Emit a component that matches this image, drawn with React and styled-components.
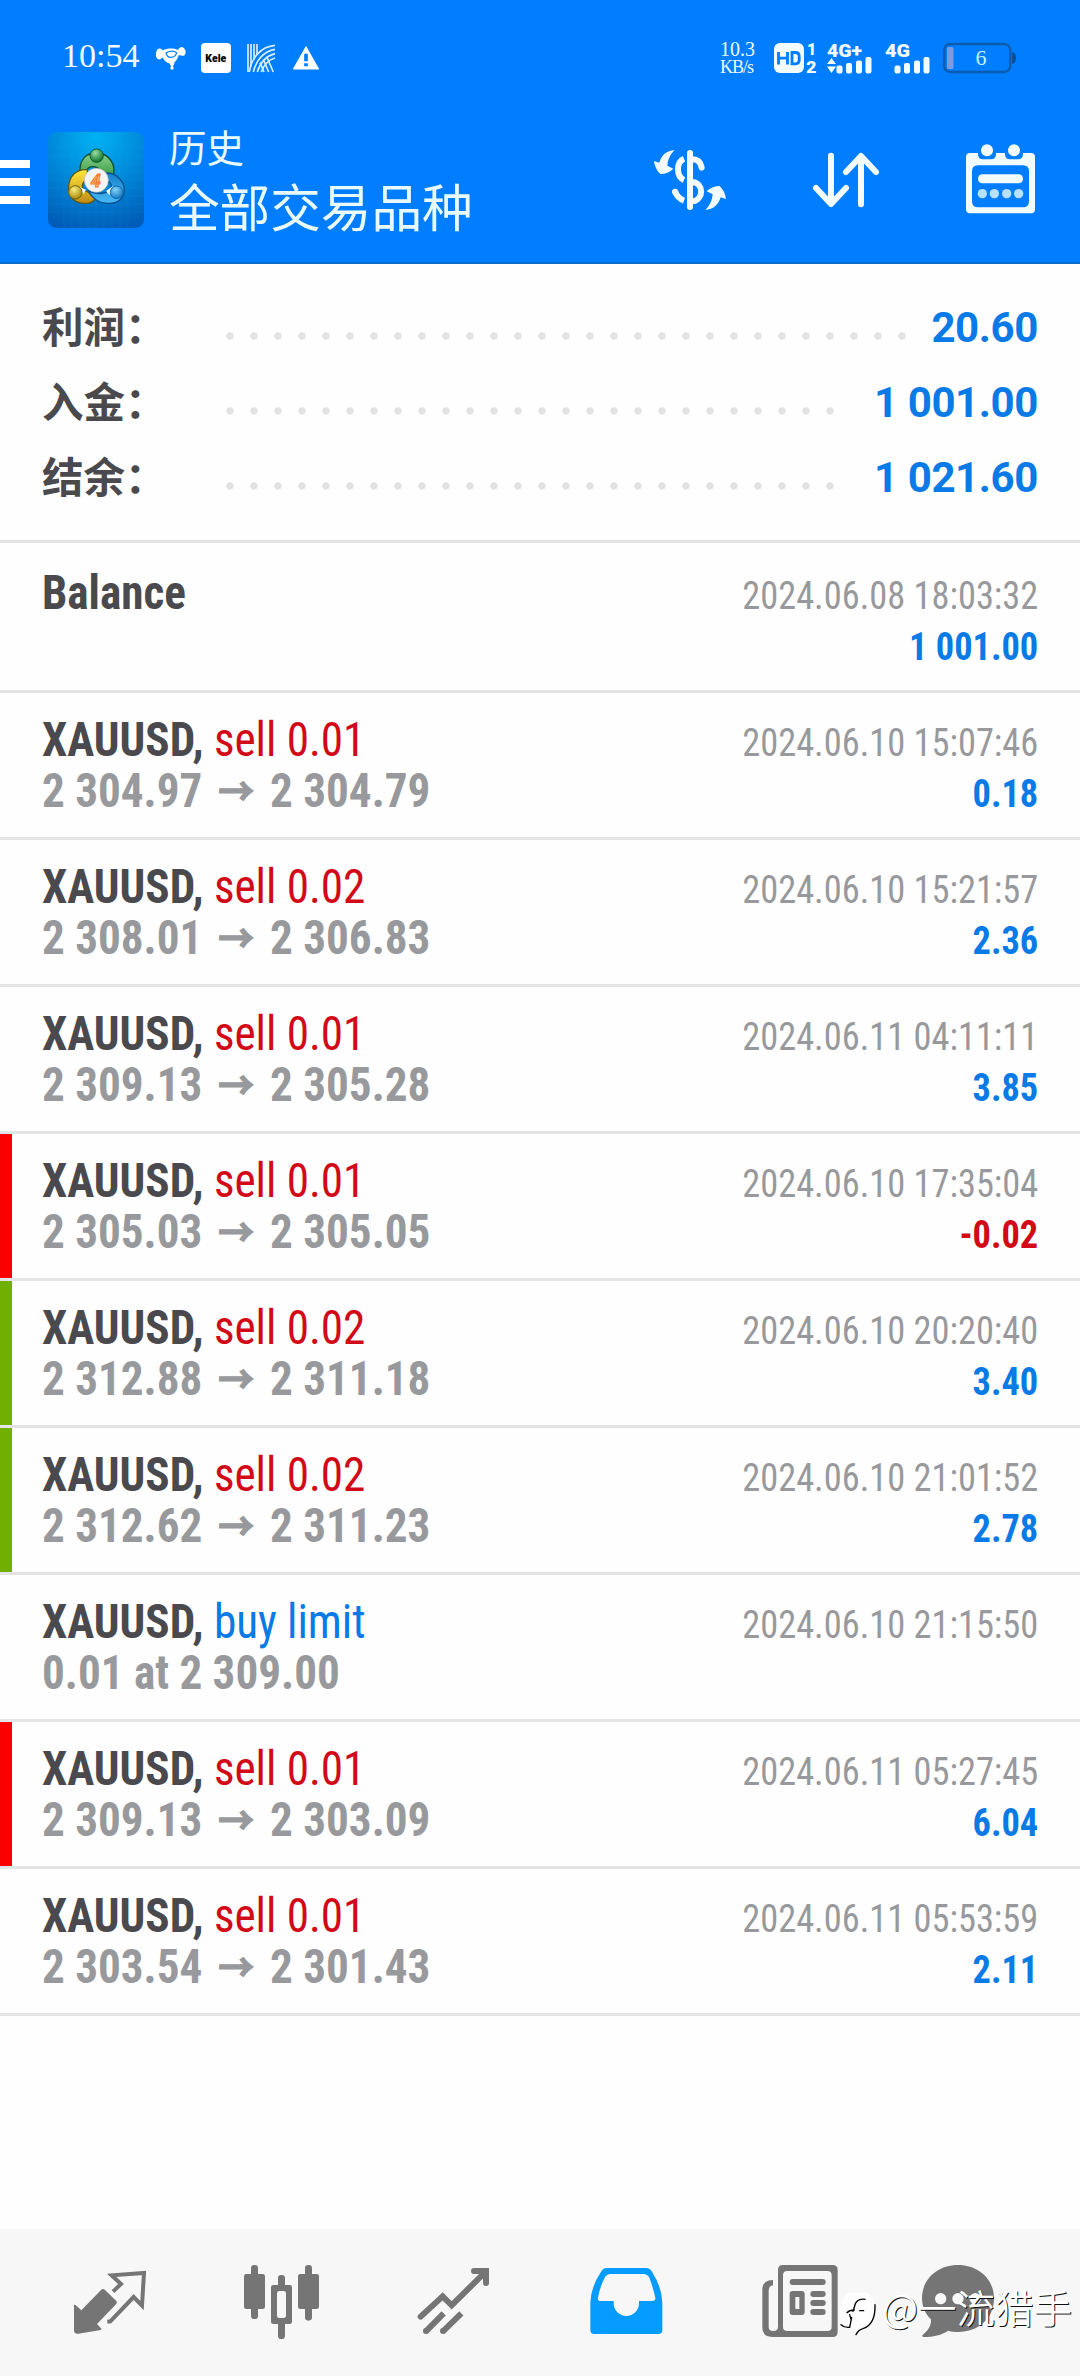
import React from 'react'
import styled, { createGlobalStyle } from 'styled-components'

const GlobalStyle = createGlobalStyle`
  * {
    box-sizing: border-box;
  }

  body {
    margin: 0;
    background-color: #ffffff;
    font-family: Roboto, 'Noto Sans CJK SC', sans-serif;
  }

  svg {
    display: block;
    flex: none;
    overflow: visible;
  }
`

const Screen = styled.div`
  position: relative;
  display: flex;
  flex-direction: column;
  width: 1080px;
  height: 2376px;
  background-color: #fefefe;
  overflow: hidden;
`

/* ---------- top area ---------- */

const Header = styled.header`
  height: 264px;
  background-color: #007eff;
  border-bottom: 2px solid #0a6cd0;
`

const StatusBar = styled.div`
  display: flex;
  align-items: center;
  height: 116px;
  padding: 0 65px 0 62px;
  color: #f0fbff;
`

const Clock = styled.span`
  width: 94px;
  font-family: 'Liberation Serif', serif;
  font-size: 34px;
  line-height: 40px;
  margin-top: -5px;
`

const StatusIcons = styled.div`
  display: flex;
  flex: 1;
  gap: 15px;
`

const Speed = styled.div`
  width: 54px;
  font-family: 'Liberation Serif', serif;
  font-size: 20px;
  line-height: 18px;
  white-space: nowrap;
`

const SpeedUnit = styled.div`
  font-size: 18px;
  letter-spacing: -1px;
`

const SignalIcons = styled.div`
  display: flex;
  gap: 13px;

  svg:first-child {
    margin-right: -4px;
  }
`

const Toolbar = styled.div`
  display: flex;
  align-items: center;
  height: 128px;
  padding-right: 44px;
`

const MenuButton = styled.div`
  display: flex;
  flex-direction: column;
  gap: 10px;
  width: 48px;
  padding-top: 4px;
`

const MenuBar = styled.div`
  width: 30px;
  height: 8px;
  background-color: #ffffff;
`

const Titles = styled.div`
  flex: 1;
  padding-left: 25px;
  color: #e9faff;
  font-family: 'Noto Sans CJK SC', sans-serif;
`

const Title = styled.div`
  margin-top: -2px;
  font-size: 37.5px;
  line-height: 52px;
`

const Subtitle = styled.div`
  font-size: 50.6px;
  line-height: 66px;
`

const Actions = styled.div`
  display: flex;
  align-items: center;
  gap: 85px;
`

/* ---------- summary ---------- */

const Summary = styled.section`
  display: flex;
  flex-direction: column;
  height: 279px;
  padding: 26px 42px 0;
  border-bottom: 3px solid #e4e4e4;
`

const SummaryRow = styled.div`
  display: flex;
  align-items: center;
  height: 75px;
`

const SummaryLabel = styled.span`
  width: 176px;
  margin-top: -6px;
  color: #4a494e;
  font-family: 'Noto Sans CJK SC', sans-serif;
  font-size: 41.5px;
  line-height: 60px;
  font-weight: 700;
`

const Dots = styled.span`
  width: ${({ $count }) => $count * 24}px;
  height: 8px;
  margin-top: 17px;
  background: radial-gradient(circle at 12px 4px, #e2e2e2 3.4px, transparent 4px) 0 0 / 24px 8px repeat-x;
`

const SummaryValue = styled.span`
  margin-left: auto;
  color: #0a7ae6;
  font-size: 42px;
  font-weight: 700;
  letter-spacing: -0.4px;
`

/* ---------- deals ---------- */

const Deal = styled.div`
  display: flex;
  justify-content: space-between;
  height: ${({ $tall }) => ($tall ? 150 : 147)}px;
  padding: ${({ $tall }) => ($tall ? 24 : 21)}px 42px 0;
  border-bottom: 3px solid #e4e4e4;
  background: linear-gradient(${({ $mark = 'transparent' }) => `${$mark}, ${$mark}`}) 0 0 / 12px 100% no-repeat;
`

const Column = styled.div`
  display: flex;
  flex-direction: column;
  align-items: ${({ $end }) => ($end ? 'flex-end' : 'flex-start')};
  padding-top: ${({ $end }) => ($end ? 4 : 0)}px;
  font-family: 'Roboto Condensed', Roboto, sans-serif;
  font-stretch: condensed;
  white-space: pre;
  transform: scaleX(${({ $end }) => ($end ? 0.933 : 0.94)});
  transform-origin: ${({ $end }) => ($end ? 'right' : 'left')} top;
`

const Symbol = styled.div`
  color: #4a494e;
  font-size: 48px;
  line-height: 51px;
  font-weight: 700;
`

const Side = styled.span`
  color: ${({ $buy }) => ($buy ? '#0a7ae6' : '#d20a17')};
  font-weight: 400;
`

const Prices = styled.div`
  display: flex;
  align-items: center;
  color: #98999c;
  font-size: 48px;
  line-height: 51px;
  font-weight: 700;
`

const Arrow = styled.span`
  margin: -4px 17px 0;
  font-family: 'Noto Sans CJK SC', sans-serif;
  font-size: 38px;
  -webkit-text-stroke: 1.4px #98999c;
`

const Time = styled.div`
  color: #98999c;
  font-size: 39px;
  line-height: 51px;
`

const Profit = styled.div`
  color: ${({ $loss }) => ($loss ? '#d20a17' : '#0a7ae6')};
  font-size: 39px;
  line-height: 51px;
  font-weight: 700;
`

/* ---------- bottom navigation ---------- */

const NavBar = styled.nav`
  display: flex;
  height: 147px;
  margin-top: auto;
  padding: 21px 24px 0;
  background-color: #f7f7f7;
`

const NavItem = styled.div`
  display: flex;
  justify-content: center;
  flex: 0 0 ${({ $width }) => $width || 172}px;
  color: ${({ $active }) => ($active ? '#069bff' : '#757575')};
`

const Watermark = styled.div`
  position: absolute;
  right: 8px;
  bottom: 39px;
  display: flex;
  align-items: center;
  gap: 5px;
  color: #ffffff;
  font-family: 'Noto Sans CJK SC', sans-serif;
  font-size: 38.5px;
  font-weight: 350;
  line-height: 54px;
  text-shadow: 1px 1px 0 #111111;
  white-space: nowrap;

  svg {
    margin-top: 17px;
  }
`

const MascotIcon = () => (
  <svg width="30" height="30" viewBox="468 69 90 90" fill="#fff">
    <path d="M470 92C474 84 482 84 488 91C504 84 520 84 534 90C538 80 548 78 551 84C559 90 559 104 551 107C545 109 541 104 536 106C532 120 524 130 515 132C500 130 492 122 488 112C482 120 474 120 470 114C466 106 468 98 470 92Z" />
    <path d="M498 99C506 92 522 92 530 98C528 108 520 112 512 112C504 112 500 108 498 99Z" fill="none" stroke="#007eff" strokeWidth="3.5" />
    <circle cx="516" cy="144" r="5" />
    <path d="M508 128L516 146L524 128Z" />
  </svg>
)

const KeleIcon = () => (
  <svg width="30" height="30" viewBox="0 0 30 30">
    <rect width="30" height="30" rx="4" fill="#fff" />
    <text x="4.3" y="18.8" textLength="21" lengthAdjust="spacingAndGlyphs" fontFamily="Roboto" fontWeight="900" fontSize="10.5" fill="#000">
      Kele
    </text>
  </svg>
)

const WavesIcon = () => (
  <svg width="30" height="30" viewBox="738 69 90 90" fill="none" stroke="#d5edff" strokeWidth="5">
    <path d="M744 72V156M753 72V140M762 72V120M771 72V104" />
    <path d="M748 156C754 116 780 80 825 76M760 156C768 122 790 94 825 88M772 156C780 130 798 108 825 101M784 156C790 138 804 120 825 114" />
    <path d="M780 128L792 156M790 118L806 156M800 110L820 156" />
  </svg>
)

const WarningIcon = () => (
  <svg width="30" height="30" viewBox="873 69 90 90">
    <path d="M918 80L956 147H880Z" fill="#fff" stroke="#fff" strokeWidth="3" strokeLinejoin="round" />
    <path d="M918 101V124M918 130V139" stroke="#007eff" strokeWidth="11" />
  </svg>
)

const HdIcon = () => (
  <svg width="44" height="32" viewBox="0 0 44 32" fill="#f2fcff" fontFamily="Roboto" fontWeight="900">
    <rect x="0" y="1" width="30" height="30" rx="6" />
    <path d="M4.5 10V22.5M13.5 10V22.5M4.5 16.2H13.5" fill="none" stroke="#007eff" strokeWidth="2.8" />
    <path d="M18 10.5H21.5Q25.2 10.5 25.2 14.5V18Q25.2 21.8 21.5 21.8H18Z" fill="none" stroke="#007eff" strokeWidth="2.8" />
    <text x="33" y="12.8" fontSize="16">
      1
    </text>
    <text x="32" y="30.5" fontSize="17" textLength="10.5" lengthAdjust="spacingAndGlyphs">
      2
    </text>
  </svg>
)

const SignalIcon = ({ plus }) => (
  <svg width="45" height="32" viewBox="0 0 45 32" fill="#f2fcff">
    <text x="0" y="14.5" fontFamily="Roboto" fontWeight="900" fontSize="18.5" textLength={plus ? 35 : 25} lengthAdjust="spacingAndGlyphs">
      {plus ? '4G+' : '4G'}
    </text>
    {plus && <path d="M4.5 16L9 22H0ZM4.5 31L0 24.5H9Z" />}
    <rect x="9.5" y="23.5" width="6" height="8" rx="2" />
    <rect x="19" y="21" width="6" height="10.5" rx="2" />
    <rect x="29" y="18.5" width="6" height="13" rx="2" />
    <rect x="38.5" y="15" width="6" height="16.5" rx="2" />
  </svg>
)

const BatteryIcon = () => (
  <svg width="72" height="32" viewBox="0 0 72 32">
    <rect x="1.2" y="2" width="66" height="28" rx="6" fill="none" stroke="#0b5cae" strokeWidth="2.4" />
    <path d="M69 10Q73 11 73 16Q73 21 69 22Z" fill="#0b4f96" />
    <rect x="4" y="5" width="6.5" height="22" rx="1.5" fill="#7c9be0" />
    <text x="32.5" y="22.5" fontFamily="Liberation Serif" fontSize="22" fill="#c5f2ff">
      6
    </text>
  </svg>
)

const AppLogo = () => (
  <svg width="96" height="96" viewBox="144 335 288 288">
    <defs>
      <radialGradient id="tile" cx="0.5" cy="0.05" r="1">
        <stop offset="0" stopColor="#00b2f2" />
        <stop offset="0.5" stopColor="#0088da" />
        <stop offset="1" stopColor="#005cb6" />
      </radialGradient>
      <linearGradient id="green" x1="0" y1="0" x2="0" y2="1">
        <stop offset="0" stopColor="#8ad08c" />
        <stop offset="1" stopColor="#1d8a2c" />
      </linearGradient>
      <linearGradient id="yellow" x1="0" y1="0" x2="0" y2="1">
        <stop offset="0" stopColor="#ffe83c" />
        <stop offset="1" stopColor="#c08a10" />
      </linearGradient>
      <linearGradient id="blue" x1="0" y1="0" x2="0" y2="1">
        <stop offset="0" stopColor="#1583cc" />
        <stop offset="1" stopColor="#48b8f4" />
      </linearGradient>
      <radialGradient id="greenBall" cx="0.4" cy="0.3" r="0.7">
        <stop offset="0" stopColor="#9ae0a4" />
        <stop offset="1" stopColor="#0c7028" />
      </radialGradient>
      <radialGradient id="yellowBall" cx="0.4" cy="0.3" r="0.7">
        <stop offset="0" stopColor="#f8ec80" />
        <stop offset="1" stopColor="#a88a08" />
      </radialGradient>
      <radialGradient id="blueBall" cx="0.4" cy="0.3" r="0.7">
        <stop offset="0" stopColor="#86d4fa" />
        <stop offset="1" stopColor="#1478c0" />
      </radialGradient>
    </defs>
    <rect x="144" y="335" width="288" height="288" rx="26" fill="url(#tile)" />
    <path
      d="M192 335V623M216 335V623M240 335V623M264 335V623M288 335V623M312 335V623M336 335V623M360 335V623M384 335V623M144 383H432M144 407H432M144 431H432M144 455H432M144 479H432M144 503H432M144 527H432M144 551H432M144 575H432"
      stroke="#40b8f0"
      strokeOpacity="0.16"
      strokeWidth="1.5"
    />
    <path
      d="M240 455C238 418 258 398 288 398C320 398 342 422 342 450C342 476 330 488 310 494L300 450C290 436 268 434 260 450Z"
      fill="url(#green)"
      stroke="#124f2c"
      strokeWidth="4"
    />
    <path
      d="M262 448C230 446 208 466 206 498C202 530 226 552 262 549C274 548 284 540 288 532L262 514C240 508 244 484 262 480Z"
      fill="url(#yellow)"
      stroke="#5c5a18"
      strokeWidth="4"
    />
    <path
      d="M318 458C352 458 374 486 373 510C370 538 350 550 322 549C294 548 274 532 266 512C284 520 314 526 332 506C338 494 330 484 320 480Z"
      fill="url(#blue)"
      stroke="#0c5090"
      strokeWidth="4"
    />
    <path d="M238 500L258 508L250 522ZM318 512L338 498L344 508L328 524Z" fill="#eef8ff" />
    <circle cx="290" cy="406" r="20" fill="url(#greenBall)" stroke="#125c30" strokeWidth="3" />
    <circle cx="226" cy="516" r="20" fill="url(#yellowBall)" stroke="#6a6414" strokeWidth="3" />
    <circle cx="350" cy="516" r="19" fill="url(#blueBall)" stroke="#0c6cb4" strokeWidth="3" />
    <circle cx="289" cy="480" r="36" fill="#f4f4f2" stroke="#b8b8b0" strokeWidth="2" />
    <text x="287" y="499" textAnchor="middle" fontFamily="Roboto" fontStyle="italic" fontWeight="700" fontSize="54" fill="#f8c070" stroke="#ef7a34" strokeWidth="3">
      4
    </text>
  </svg>
)

const CurrencyIcon = () => (
  <svg width="74" height="64" viewBox="99 84 222 192" fill="none" stroke="#f2fcff" strokeWidth="18">
    <path d="M210 99V261M218 118C234 118 242 127 245 143" strokeLinecap="round" />
    <path d="M192 116C168 126 168 170 192 180M218 186C252 190 252 238 218 244" />
    <path d="M165 214C170 228 178 237 192 242" />
    <circle cx="165" cy="215" r="9" fill="#f2fcff" stroke="none" />
    <path
      d="M164 90C140 92 125 104 118 128L102 123C104 140 112 154 122 162C136 162 150 156 160 146L142 137C144 116 152 102 164 90ZM256 270C280 268 295 256 302 232L318 237C316 220 308 206 298 198C284 198 270 204 260 214L278 223C276 244 268 258 256 270Z"
      fill="#f2fcff"
      stroke="none"
    />
  </svg>
)

const SortIcon = () => (
  <svg width="68" height="64" viewBox="576 84 204 192" fill="none" stroke="#f2fcff" strokeWidth="18" strokeLinecap="round" strokeLinejoin="round">
    <path d="M633 107V250M588 204L633 252L678 204" />
    <path d="M723 253V110M678 156L723 108L768 156" />
  </svg>
)

const CalendarIcon = () => (
  <svg width="71" height="71" viewBox="1035 74 213 213" fill="#f2fcff">
    <path
      fillRule="evenodd"
      d="M1050 98H1233Q1245 98 1245 110V267Q1245 279 1233 279H1050Q1038 279 1038 267V110Q1038 98 1050 98ZM1074 135Q1056 135 1056 153V243Q1056 261 1074 261H1209Q1227 261 1227 243V153Q1227 135 1209 135Z"
    />
    <path d="M1074 94H1128V102Q1128 117 1113 117H1089Q1074 117 1074 102ZM1155 94H1209V102Q1209 117 1194 117H1170Q1155 117 1155 102Z" fill="#007eff" />
    <circle cx="1101" cy="90" r="18" />
    <circle cx="1182" cy="90" r="18" />
    <rect x="1074" y="162" width="135" height="27" rx="13" />
    <g fill="#b8e0ff">
      <circle cx="1087" cy="220" r="14" />
      <circle cx="1123" cy="220" r="14" />
      <circle cx="1160" cy="220" r="14" />
      <circle cx="1196" cy="220" r="14" />
    </g>
  </svg>
)

const QuotesIcon = () => (
  <svg width="96" height="90" viewBox="6 0 288 270" fill="currentColor">
    <path d="M42 165Q44 163 50 168L64 181L123 120Q129 114 135 120L169 153Q173 158 168 163L111 222L125 237Q124 240 118 241L54 251Q42 252 42 241Z" />
    <path d="M159 125L183 102L155 76L252 69L246 167L221 141L151 214L142 215" fill="none" stroke="currentColor" strokeWidth="12" />
  </svg>
)

const ChartIcon = () => (
  <svg width="96" height="90" viewBox="522 0 288 270" fill="currentColor">
    <rect x="573" y="45" width="21" height="162" rx="10" />
    <rect x="552" y="72" width="63" height="105" rx="7" />
    <rect x="735" y="45" width="21" height="167" rx="10" />
    <rect x="714" y="72" width="63" height="105" rx="7" />
    <rect x="654" y="75" width="21" height="192" rx="10" />
    <rect x="633" y="105" width="63" height="117" rx="7" />
    <rect x="651" y="123" width="27" height="81" rx="7" fill="#f7f7f7" />
  </svg>
)

const TradeIcon = () => (
  <svg width="96" height="90" viewBox="1038 0 288 270" fill="none" stroke="currentColor" strokeWidth="18">
    <path d="M1082 200L1148 139L1175 166L1274 68M1242 63H1278V99" strokeLinecap="round" />
    <path d="M1262 54H1280Q1287 54 1287 61V80L1270 84L1256 70Z" fill="currentColor" stroke="none" />
    <path d="M1097 245L1151 190M1148 245L1204 190" />
    <circle cx="1098" cy="243" r="9" fill="currentColor" stroke="none" />
    <circle cx="1149" cy="243" r="9" fill="currentColor" stroke="none" />
  </svg>
)

const HistoryIcon = () => (
  <svg width="96" height="90" viewBox="-6 0 288 270" fill="currentColor">
    <path
      fillRule="evenodd"
      d="M80 54H198Q210 54 216 65Q246 112 247 158V240Q247 252 235 252H43Q31 252 31 240V158Q32 112 64 64Q70 54 80 54ZM92 72Q80 72 74 83Q60 110 54 143Q52 153 62 153H101V160A38 38 0 0 0 177 160V153H216Q227 153 226 144Q218 108 208 83Q202 72 190 72Z"
    />
  </svg>
)

const NewsIcon = () => (
  <svg width="96" height="90" viewBox="510 0 288 270" fill="currentColor">
    <path
      fillRule="evenodd"
      d="M609 45H758Q773 45 773 60V246Q773 261 758 261H576Q547 261 547 232V120Q547 90 579 90V106Q566 107 566 122V230Q566 243 579 243Q594 243 594 230V60Q594 45 609 45ZM622 63Q609 63 609 76V230Q609 243 622 243H742Q755 243 755 230V76Q755 63 742 63Z"
    />
    <rect x="629" y="87" width="108" height="18" rx="9" />
    <path fillRule="evenodd" d="M638 123H665Q674 123 674 132V186Q674 195 665 195H638Q629 195 629 186V132Q629 123 638 123ZM646 141V177H658V141Z" />
    <rect x="691" y="123" width="46" height="18" rx="9" />
    <rect x="691" y="150" width="46" height="18" rx="9" />
    <rect x="691" y="177" width="46" height="18" rx="9" />
  </svg>
)

const ChatIcon = () => (
  <svg width="96" height="90" viewBox="990 0 288 270" fill="currentColor">
    <path d="M1134 45C1196 45 1242 88 1242 145C1242 205 1196 246 1134 246C1124 246 1114 245 1105 242C1085 255 1060 261 1030 261C1026 260 1026 256 1030 253C1046 240 1054 226 1053 208C1036 192 1026 170 1026 145C1026 88 1072 45 1134 45Z" />
    <circle cx="1082" cy="146" r="17" fill="#f7f7f7" />
    <circle cx="1134" cy="146" r="17" fill="#f7f7f7" />
    <circle cx="1186" cy="146" r="17" fill="#f7f7f7" />
  </svg>
)

const CommunityLogo = () => (
  <svg width="38" height="46" viewBox="780 137 114 138" fill="none" strokeLinecap="round">
    <path d="M812 142H862Q886 150 887 182Q888 240 836 266Q832 250 806 246Q782 236 783 204Q780 160 812 142Z" fill="#fff" />
    <path d="M888 178Q890 236 852 250Q838 254 831 268" stroke="#000" strokeWidth="4" />
    <path d="M858 162Q830 158 826 186L822 198M812 208L816 222M786 238Q796 248 812 246L818 216M804 202Q812 194 826 194M842 196H854" stroke="#000" strokeWidth="4" />
  </svg>
)

const summary = [
  { label: '利润：', value: '20.60', dots: 29 },
  { label: '入金：', value: '1 001.00', dots: 26 },
  { label: '结余：', value: '1 021.60', dots: 26 }
]

const RED = '#fa0000'
const GREEN = '#70b000'

const deals = [
  { symbol: 'Balance', time: '2024.06.08 18:03:32', profit: '1 001.00' },
  { symbol: 'XAUUSD,', side: 'sell 0.01', from: '2 304.97', to: '2 304.79', time: '2024.06.10 15:07:46', profit: '0.18' },
  { symbol: 'XAUUSD,', side: 'sell 0.02', from: '2 308.01', to: '2 306.83', time: '2024.06.10 15:21:57', profit: '2.36' },
  { symbol: 'XAUUSD,', side: 'sell 0.01', from: '2 309.13', to: '2 305.28', time: '2024.06.11 04:11:11', profit: '3.85' },
  { symbol: 'XAUUSD,', side: 'sell 0.01', from: '2 305.03', to: '2 305.05', time: '2024.06.10 17:35:04', profit: '-0.02', mark: RED },
  { symbol: 'XAUUSD,', side: 'sell 0.02', from: '2 312.88', to: '2 311.18', time: '2024.06.10 20:20:40', profit: '3.40', mark: GREEN },
  { symbol: 'XAUUSD,', side: 'sell 0.02', from: '2 312.62', to: '2 311.23', time: '2024.06.10 21:01:52', profit: '2.78', mark: GREEN },
  { symbol: 'XAUUSD,', side: 'buy limit', from: '0.01 at 2 309.00', time: '2024.06.10 21:15:50' },
  { symbol: 'XAUUSD,', side: 'sell 0.01', from: '2 309.13', to: '2 303.09', time: '2024.06.11 05:27:45', profit: '6.04', mark: RED },
  { symbol: 'XAUUSD,', side: 'sell 0.01', from: '2 303.54', to: '2 301.43', time: '2024.06.11 05:53:59', profit: '2.11' }
]

export default function App() {
  return (
    <Screen>
      <GlobalStyle />
      <Header>
        <StatusBar>
          <Clock>10:54</Clock>
          <StatusIcons>
            <MascotIcon />
            <KeleIcon />
            <WavesIcon />
            <WarningIcon />
          </StatusIcons>
          <Speed>
            10.3
            <SpeedUnit>KB/s</SpeedUnit>
          </Speed>
          <SignalIcons>
            <HdIcon />
            <SignalIcon plus />
            <SignalIcon />
            <BatteryIcon />
          </SignalIcons>
        </StatusBar>
        <Toolbar>
          <MenuButton>
            <MenuBar />
            <MenuBar />
            <MenuBar />
          </MenuButton>
          <AppLogo />
          <Titles>
            <Title>历史</Title>
            <Subtitle>全部交易品种</Subtitle>
          </Titles>
          <Actions>
            <CurrencyIcon />
            <SortIcon />
            <CalendarIcon />
          </Actions>
        </Toolbar>
      </Header>

      <Summary>
        {summary.map(({ label, value, dots }) => (
          <SummaryRow key={label}>
            <SummaryLabel>{label}</SummaryLabel>
            <Dots $count={dots} />
            <SummaryValue>{value}</SummaryValue>
          </SummaryRow>
        ))}
      </Summary>

      {deals.map(({ symbol, side, from, to, time, profit, mark }) => (
        <Deal key={time} $tall={!side} $mark={mark}>
          <Column>
            <Symbol>
              {symbol}
              {side && <Side $buy={side.startsWith('buy')}> {side}</Side>}
            </Symbol>
            {from && (
              <Prices>
                {from}
                {to && <Arrow>→</Arrow>}
                {to}
              </Prices>
            )}
          </Column>
          <Column $end>
            <Time>{time}</Time>
            {profit && <Profit $loss={profit.startsWith('-')}>{profit}</Profit>}
          </Column>
        </Deal>
      ))}

      <NavBar>
        <NavItem>
          <QuotesIcon />
        </NavItem>
        <NavItem>
          <ChartIcon />
        </NavItem>
        <NavItem>
          <TradeIcon />
        </NavItem>
        <NavItem $active>
          <HistoryIcon />
        </NavItem>
        <NavItem>
          <NewsIcon />
        </NavItem>
        <NavItem $width={148}>
          <ChatIcon />
        </NavItem>
      </NavBar>

      <Watermark>
        <CommunityLogo />
        @一流猎手
      </Watermark>
    </Screen>
  )
}
